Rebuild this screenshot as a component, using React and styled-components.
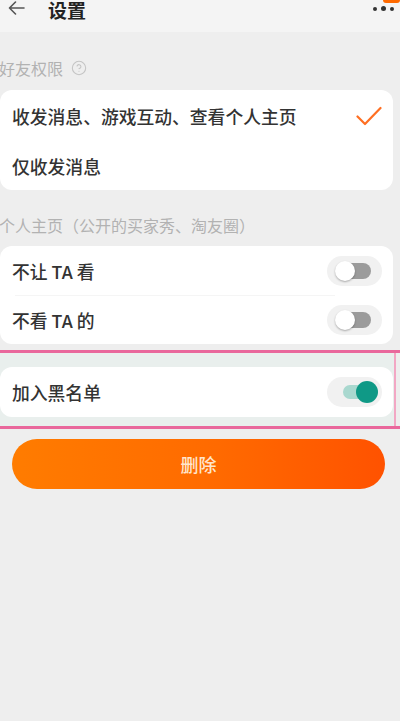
import React from "react";
import styled, { createGlobalStyle } from "styled-components";
import { CircleHelp } from "lucide-react";

const Global = createGlobalStyle`
  html, body { margin: 0; padding: 0; }
  body {
    background: #eeeeee;
    font-family: "Noto Sans CJK SC", "Noto Sans", sans-serif;
    width: 400px;
    height: 721px;
    overflow: hidden;
  }
`;

const Page = styled.div`
  width: 400px;
  height: 721px;
  background: #eeeeee;
  display: flex;
  flex-direction: column;
  position: relative;
  overflow: hidden;
`;

const Header = styled.div`
  height: 32px;
  background: #f4f4f4;
  display: flex;
  align-items: flex-start;
  padding: 0 0 0 8px;
  position: relative;
`;

const Back = styled.svg`
  width: 17px;
  height: 14px;
  margin-top: 1px;
`;

const Title = styled.div`
  margin-left: 23px;
  margin-top: 0;
  font-size: 19px;
  line-height: 20px;
  font-weight: 700;
  color: #222;
`;

const More = styled.div`
  position: absolute;
  right: 6px;
  top: 6px;
  display: flex;
  gap: 4px;
  align-items: center;
`;

const Dot = styled.span`
  width: ${p => p.$s}px;
  height: ${p => p.$s}px;
  border-radius: 50%;
  background: #333;
`;

const Badge = styled.span`
  position: absolute;
  right: 0;
  top: 0;
  width: 17px;
  height: 3px;
  background: #ff6a00;
  border-radius: 0 0 3px 3px;
`;

const SectionLabel = styled.div`
  display: flex;
  align-items: center;
  gap: 8px;
  font-size: 16px;
  line-height: 22px;
  color: #b2b2b2;
  padding: ${p => p.$pad};
  margin-left: -1px;
`;

const Card = styled.div`
  width: 393px;
  background: #ffffff;
  border-radius: 12px;
  display: flex;
  flex-direction: column;
`;

const Row = styled.div`
  height: ${p => p.$h}px;
  display: flex;
  align-items: center;
  justify-content: space-between;
  padding: 0 11px 0 12px;
  font-size: 17.8px;
  font-weight: 500;
  color: #333;
  position: relative;
  ${p => p.$divider && `
    &::after {
      content: "";
      position: absolute;
      left: 15px;
      right: 58px;
      bottom: 0;
      height: 1px;
      background: #f5f5f5;
    }
  `}
`;

const Check = styled.svg`
  width: 26px;
  height: 20px;
`;

const SwitchHalo = styled.div`
  width: 55px;
  height: 30px;
  border-radius: 15px;
  background: #f1f1f1;
  position: relative;
  flex-shrink: 0;
`;

const Track = styled.div`
  position: absolute;
  left: ${p => (p.$on ? 16 : 14)}px;
  top: ${p => (p.$on ? 8 : 7)}px;
  width: ${p => (p.$on ? 32 : 30)}px;
  height: ${p => (p.$on ? 14 : 16)}px;
  border-radius: 8px;
  background: ${p => (p.$on ? "#a9d8cf" : "#9b9b9b")};
`;

const Thumb = styled.div`
  position: absolute;
  top: ${p => (p.$on ? 4 : 5)}px;
  left: ${p => (p.$on ? 29 : 8)}px;
  width: ${p => (p.$on ? 22 : 20)}px;
  height: ${p => (p.$on ? 22 : 20)}px;
  border-radius: 50%;
  background: ${p => (p.$on ? "#0f9986" : "#ffffff")};
  box-shadow: ${p => (p.$on ? "none" : "0 1px 2px rgba(0,0,0,0.3)")};
`;

const PinkBox = styled.div`
  margin-top: 6px;
  border-top: 3px solid #e9689c;
  border-bottom: 3px solid #e9689c;
`;

const PinkInner = styled.div`
  width: 394px;
  border-right: 2px solid #f2a7c4;
  background: #e9efed;
  padding: 14px 0 9px 0;
`;

const DeleteButton = styled.button`
  margin: 10px 0 0 12px;
  width: 373px;
  height: 50px;
  border: none;
  border-radius: 25px;
  background: linear-gradient(90deg, #ff7c00 0%, #ff6a00 55%, #ff5200 100%);
  color: #ffe6cc;
  font-family: inherit;
  font-size: 18px;
  font-weight: 500;
  display: flex;
  align-items: center;
  justify-content: center;
  padding: 0;
`;

function Switch({ on }) {
  return (
    <SwitchHalo>
      <Track $on={on} />
      <Thumb $on={on} />
    </SwitchHalo>
  );
}

export default function App() {
  return (
    <>
      <Global />
      <Page>
        <Header>
          <Back viewBox="0 0 17 14">
            <path d="M16 7H1.5M7.5 1L1.5 7l6 6" fill="none" stroke="#555" strokeWidth="1.6" strokeLinecap="round" strokeLinejoin="round" />
          </Back>
          <Title>设置</Title>
          <Badge />
          <More>
            <Dot $s={4} />
            <Dot $s={5} />
            <Dot $s={4} />
          </More>
        </Header>

        <SectionLabel $pad="25px 0 11px 0">
          好友权限
          <CircleHelp size={16} color="#c4c4c4" strokeWidth={1.6} />
        </SectionLabel>

        <Card>
          <Row $h={51}>
            收发消息、游戏互动、查看个人主页
            <Check viewBox="0 0 26 20">
              <path d="M1.5 10.5l7.5 7.5L24.5 2" fill="none" stroke="#ff6f22" strokeWidth="2.2" strokeLinecap="round" strokeLinejoin="round" />
            </Check>
          </Row>
          <Row $h={49}>仅收发消息</Row>
        </Card>

        <SectionLabel $pad="24px 0 10px 0">个人主页（公开的买家秀、淘友圈）</SectionLabel>

        <Card>
          <Row $h={50} $divider>
            不让 TA 看
            <Switch on={false} />
          </Row>
          <Row $h={48}>
            不看 TA 的
            <Switch on={false} />
          </Row>
        </Card>

        <PinkBox>
          <PinkInner>
            <Card>
              <Row $h={50}>
                加入黑名单
                <Switch on />
              </Row>
            </Card>
          </PinkInner>
        </PinkBox>

        <DeleteButton>删除</DeleteButton>
      </Page>
    </>
  );
}
